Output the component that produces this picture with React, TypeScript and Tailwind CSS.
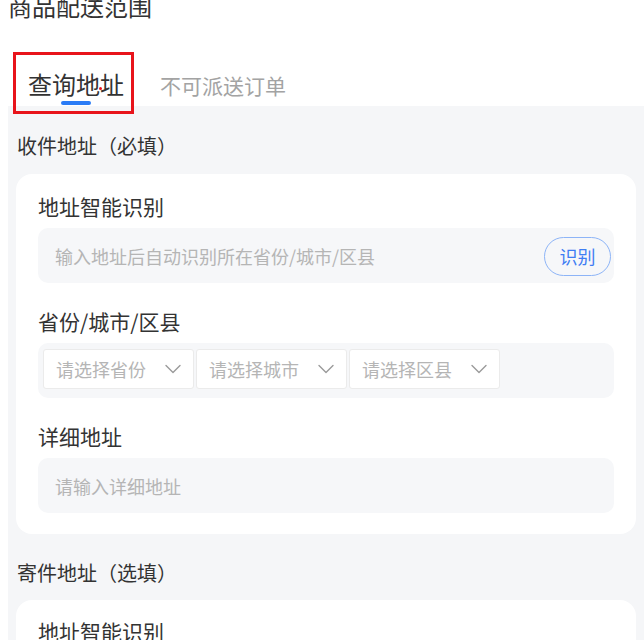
import React from "react";

const font = { fontFamily: '"Noto Sans CJK SC", "Noto Sans", sans-serif' };

function Chevron() {
  return (
    <svg width="16" height="10" viewBox="0 0 16 10" fill="none">
      <path d="M1 1.5 L8 8.5 L15 1.5" stroke="#9a9a9a" strokeWidth="1.4" strokeLinecap="round" strokeLinejoin="round" />
    </svg>
  );
}

function Select({ label }: { label: string }) {
  return (
    <div className="flex h-[40px] w-[151px] items-center justify-between rounded-[3px] border border-[#ebebeb] bg-white pl-[12px] pr-[12px]">
      <span className="text-[18px] leading-[24px] text-[#b5b5b5]">{label}</span>
      <Chevron />
    </div>
  );
}

function Label({ children }: { children: React.ReactNode }) {
  return <div className="text-[21px] leading-[28px] text-[#333333]">{children}</div>;
}

export default function App() {
  return (
    <div className="relative h-[640px] w-[644px] overflow-hidden bg-white" style={font}>
      <div className="-mt-[6px] h-[24px] pl-[8px] text-[24px] leading-[24px] text-[#333333]">商品配送范围</div>
      <div className="flex h-[88px] items-start gap-[36px] pl-[28px] pt-[54px]">
        <div className="flex flex-col items-center">
          <span className="text-[24px] leading-[24px] text-[#333333]">查询地址</span>
          <span className="mt-[5px] h-[4px] w-[30px] rounded-full bg-[#2b7cf6]" />
        </div>
        <span className="mt-[1px] text-[21px] leading-[24px] text-[#a3a3a3]">不可派送订单</span>
      </div>

      <div className="ml-[8px] bg-[#f5f6f8] pt-[26px]">
        <div className="pl-[9px] text-[20px] leading-[28px] text-[#333333]">收件地址（必填）</div>
        <div className="mx-[8px] mt-[14px] rounded-[16px] bg-white px-[22px] pb-[21px] pt-[18px]">
          <Label>地址智能识别</Label>
          <div className="mt-[8px] flex h-[55px] items-center justify-between rounded-[10px] bg-[#f6f7f9] pl-[17px] pr-[3px]">
            <span className="text-[18px] leading-[24px] text-[#b5b5b5]">输入地址后自动识别所在省份/城市/区县</span>
            <span className="mt-[1px] flex h-[39px] w-[67px] items-center justify-center rounded-full border-[1.5px] border-[#8db4f7] text-[18px] leading-[24px] text-[#3f7df3]">识别</span>
          </div>
          <div className="mt-[24px]">
            <Label>省份/城市/区县</Label>
          </div>
          <div className="mt-[8px] flex h-[55px] items-start gap-[2px] rounded-[10px] bg-[#f6f7f9] pl-[5px] pt-[6px]">
            <Select label="请选择省份" />
            <Select label="请选择城市" />
            <Select label="请选择区县" />
          </div>
          <div className="mt-[24px]">
            <Label>详细地址</Label>
          </div>
          <div className="mt-[8px] flex h-[55px] items-center rounded-[10px] bg-[#f6f7f9] pl-[17px]">
            <span className="text-[18px] leading-[24px] text-[#b5b5b5]">请输入详细地址</span>
          </div>
        </div>
        <div className="mt-[25px] pl-[9px] text-[20px] leading-[28px] text-[#333333]">寄件地址（选填）</div>
        <div className="mx-[8px] mt-[13px] h-[200px] rounded-[16px] bg-white px-[22px] pt-[17px]">
          <Label>地址智能识别</Label>
        </div>
      </div>

      <div className="pointer-events-none absolute left-[13px] top-[52px] h-[62px] w-[121px] border-[3px] border-[#e8141b]" />
      <div className="pointer-events-none absolute left-[99px] top-[87px] h-[3px] w-[3px] rounded-full bg-[#e8141b]" />
    </div>
  );
}
